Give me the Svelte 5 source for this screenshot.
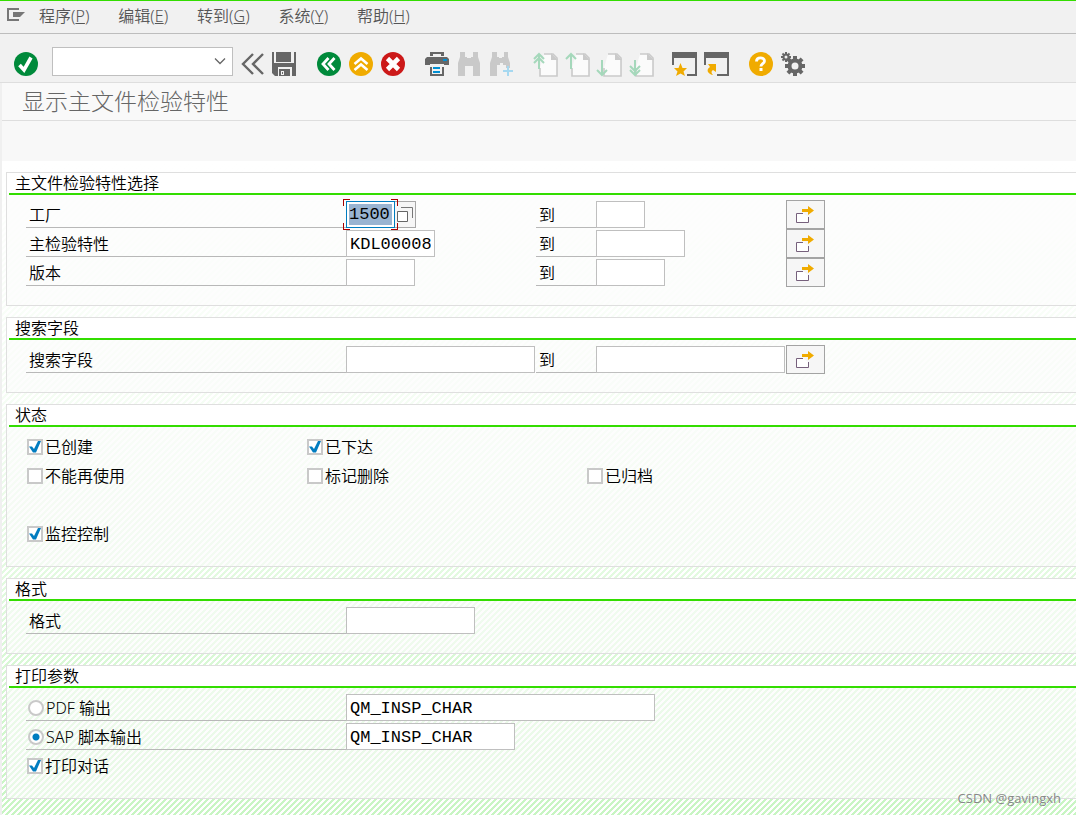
<script>
	const menus = [
		['程序', 'P'],
		['编辑', 'E'],
		['转到', 'G'],
		['系统', 'Y'],
		['帮助', 'H']
	];

	const toolGroups = [
		['collapse', 'save'],
		['back', 'up', 'cancel'],
		['print', 'find', 'findNext'],
		['firstPage', 'prevPage', 'nextPage', 'lastPage'],
		['session', 'shortcut'],
		['help', 'settings']
	];

	const toolLabels = {
		collapse: '隐藏命令字段',
		save: '保存',
		back: '返回',
		up: '退出',
		cancel: '取消',
		print: '打印',
		find: '查找',
		findNext: '继续查找',
		firstPage: '第一页',
		prevPage: '上一页',
		nextPage: '下一页',
		lastPage: '最后一页',
		session: '新会话',
		shortcut: '创建快捷方式',
		help: '帮助',
		settings: '定制本地布局'
	};

	const teeth = [0, 45, 90, 135, 180, 225, 270, 315];

	let ranges = $state([
		{ id: 'plant', label: '工厂', size: 'w4', from: '1500', to: '', active: true },
		{ id: 'char', label: '主检验特性', size: 'w8', from: 'KDL00008', to: '' },
		{ id: 'version', label: '版本', size: 'w6', from: '', to: '' }
	]);
	let search = $state([{ id: 'search', label: '搜索字段', size: 'w18', from: '', to: '' }]);

	let statuses = $state([
		[
			{ label: '已创建', checked: true },
			{ label: '已下达', checked: true }
		],
		[
			{ label: '不能再使用', checked: false },
			{ label: '标记删除', checked: false },
			{ label: '已归档', checked: false }
		],
		[],
		[{ label: '监控控制', checked: true }]
	]);

	let layout = $state('');
	let output = $state('sap');
	let pdfForm = $state('QM_INSP_CHAR');
	let sapForm = $state('QM_INSP_CHAR');
	let dialog = $state(true);
</script>

{#snippet page(arrow)}
	<path d="M11 2h9l4 4v18H7V16" fill="#fbfbfb" stroke="#cacaca" stroke-width="1.6" />
	<path d="M18 1l7 7h-7z" fill="#cacaca" />
	<path d={arrow} fill="none" stroke="#a5d8bb" stroke-width="2" />
{/snippet}

{#snippet icon(name)}
	<svg viewBox="0 0 24 24" aria-hidden="true">
		{#if name === 'enter'}
			<circle cx="12" cy="12" r="12" fill="#008a3b" />
			<path d="M5.500 13l4.500 5L17 5.500" fill="none" stroke="#fff" stroke-width="3.600" />
		{:else if name === 'collapse'}
			<path d="M12 2L2 12l10 10M22 2L12 12l10 10" fill="none" stroke="#666" stroke-width="2.400" />
		{:else if name === 'save'}
			<path d="M-1 0h2v11h20V0h2v24h-4v-9H5v9H2l-3-3z" fill="#666" />
			<path d="M3 0h15v10H3zM6 17h11v7H6z" fill="#666" />
			<path d="M8 19h3v4H8z" fill="#f1f1f1" />
			<path d="M9 20h1v2H9z" fill="#666" />
		{:else if name === 'back'}
			<circle cx="12" cy="12" r="12" fill="#008a3b" />
			<path d="M11.500 6L6 12l5.500 6M17.500 6L12 12l5.500 6" fill="none" stroke="#fff" stroke-width="2.800" />
		{:else if name === 'up'}
			<circle cx="12" cy="12" r="12" fill="#f0ab00" />
			<path d="M5.500 12L12 6.500l6.500 5.500M5.500 18l6.500-5.500 6.500 5.500" fill="none" stroke="#fff" stroke-width="2.600" />
		{:else if name === 'cancel'}
			<circle cx="12" cy="12" r="12" fill="#cc1919" />
			<path d="M6.500 6.500l11 11M17.500 6.500l-11 11" stroke="#fff" stroke-width="4.600" />
		{:else if name === 'print'}
			<path d="M5 4V0h14v4h-3V2H8v2z" fill="#666" />
			<path d="M2 5h20l2 2v6h-5v-1H5v1H0V7z" fill="#666" />
			<path d="M5 15h2v7h10v-7h2v9H5z" fill="#666" />
			<path d="M18 7h4v2h-4zM8 15h7v2H8zM8 19h7v2H8z" fill="#008fd3" />
		{:else if name === 'find'}
			<path d="M3 0h5v5h2v1h4V5h2V0h5v5l2 6v13h-7V14H8v10H1V11l2-6z" fill="#c9c9c9" />
		{:else if name === 'findNext'}
			<path d="M3 0h5v5h2v1h3V5h2V0h4v5l2 6v5h-4v-3h-3v-2h-3v2H8v11H1V11l2-6z" fill="#c9c9c9" />
			<path d="M19 14v10M14 19h10" stroke="#a6d8f0" stroke-width="2" />
		{:else if name === 'firstPage'}
			{@render page('M6 17V2M1 7l5-5 5 5M1 11l5-5 5 5')}
		{:else if name === 'prevPage'}
			{@render page('M6 17V2M1 7l5-5 5 5')}
		{:else if name === 'nextPage'}
			{@render page('M5 8v15M0 18l5 5 5-5')}
		{:else if name === 'lastPage'}
			{@render page('M6 8v15M1 18l5 5 5-5M1 14l5 5 5-5')}
		{:else if name === 'session'}
			<path d="M-1 0h25v24H14v-2h8V6H1v7h-2z" fill="#666" />
			<path d="M7.500 11l2 5H14l-3.500 3.500L12 24l-4.500-2.500L3 24l1.500-4.500L1 16h4.500z" fill="#f0ab00" />
		{:else if name === 'shortcut'}
			<path d="M-1 0h25v24H12v-2h10V6H1v7h-2z" fill="#666" />
			<path d="M3 12h8v8l-3-2c-2 1-2 3 0 5-6-1-7-6-3-8z" fill="#f0ab00" />
		{:else if name === 'help'}
			<circle cx="12" cy="12" r="12" fill="#f0ab00" />
			<path d="M7.500 9.500c0-5 8-4.500 8-.5 0 2.600-3.600 2.800-3.600 5.500" fill="none" stroke="#fff" stroke-width="2.800" />
			<path d="M10.500 16h3v3h-3z" fill="#fff" />
		{:else if name === 'settings'}
			<g transform="translate(14 14)" stroke="#666">
				{#each teeth as angle}
					<path d="M0 -6V-10" stroke-width="4" transform="rotate({angle})" />
				{/each}
				<circle r="5.500" fill="none" stroke-width="4" />
			</g>
			<g transform="translate(5 5)" stroke="#666">
				{#each teeth as angle}
					<path d="M0 -3V-5" stroke-width="2" transform="rotate({angle})" />
				{/each}
				<circle r="2.500" fill="#f1f1f1" stroke-width="2" />
			</g>
		{/if}
	</svg>
{/snippet}

{#snippet rangeRow(row)}
	<div class="row">
		<label class="name" for="{row.id}-from">{row.label}</label>
		<div class="value">
			{#if row.active}
				<span class="focus">
					<input id="{row.id}-from" class="field {row.size} active" bind:value={row.from} />
				</span>
				<button class="lookup" aria-label="值列表">
					<svg viewBox="0 0 18 18" aria-hidden="true">
						<path d="M5 1.500h11.500V12" fill="none" stroke="#777" />
						<path d="M1.500 5.500h10v10h-10z" fill="#fff" stroke="#666" />
					</svg>
				</button>
			{:else}
				<input id="{row.id}-from" class="field {row.size}" bind:value={row.from} />
			{/if}
		</div>
		<label class="name" for="{row.id}-to">到</label>
		<div class="value">
			<input id="{row.id}-to" class="field {row.size}" bind:value={row.to} />
		</div>
		<button class="more" aria-label="多项选择">
			<svg viewBox="0 0 18 18" aria-hidden="true">
				<path d="M7 7.500H.5v9h12V11" fill="#fff" stroke="#76607c" />
				<path d="M6 3h6V0l6 4.500L12 9V6H6z" fill="#f0ab00" />
			</svg>
		</button>
	</div>
{/snippet}

<div class="window">
	<nav class="menubar">
		<button class="system" aria-label="菜单">
			<svg viewBox="0 0 18 14" aria-hidden="true">
				<path d="M12 1H1v11h11" fill="none" stroke="#777" stroke-width="2" />
				<path d="M6 4h12l-5 5H6z" fill="#777" />
			</svg>
		</button>
		{#each menus as [text, key]}
			<button>{text}(<u>{key}</u>)</button>
		{/each}
	</nav>

	<div class="toolbar">
		<button class="tool" aria-label="回车">{@render icon('enter')}</button>
		<div class="command">
			<select aria-label="命令字段"><option></option></select>
			<svg viewBox="0 0 10 6" aria-hidden="true">
				<path d="M0 0.500l5 5 5-5" fill="none" stroke="#666" stroke-width="1.300" />
			</svg>
		</div>
		{#each toolGroups as group}
			<div class="tools">
				{#each group as name}
					<button class="tool" aria-label={toolLabels[name]}>{@render icon(name)}</button>
				{/each}
			</div>
		{/each}
	</div>

	<h1>显示主文件检验特性</h1>
	<div class="appbar"></div>

	<main>
		<section>
			<h2>主文件检验特性选择</h2>
			<div class="body">
				{#each ranges as row}
					{@render rangeRow(row)}
				{/each}
			</div>
		</section>

		<section>
			<h2>搜索字段</h2>
			<div class="body">
				{#each search as row}
					{@render rangeRow(row)}
				{/each}
			</div>
		</section>

		<section>
			<h2>状态</h2>
			<div class="body">
				{#each statuses as line}
					<div class="checks">
						{#each line as item}
							<label class="option"><input type="checkbox" bind:checked={item.checked} />{item.label}</label>
						{/each}
					</div>
				{/each}
			</div>
		</section>

		<section>
			<h2>格式</h2>
			<div class="body">
				<div class="row">
					<label class="name" for="layout">格式</label>
					<input id="layout" class="field w12" bind:value={layout} />
				</div>
			</div>
		</section>

		<section>
			<h2>打印参数</h2>
			<div class="body">
				<div class="row">
					<label class="name option"><input type="radio" name="output" value="pdf" bind:group={output} />PDF 输出</label>
					<input class="field w30" aria-label="PDF 表格" bind:value={pdfForm} />
				</div>
				<div class="row">
					<label class="name option"><input type="radio" name="output" value="sap" bind:group={output} />SAP 脚本输出</label>
					<input class="field w16" aria-label="SAP 脚本表格" bind:value={sapForm} />
				</div>
				<div class="checks">
					<label class="option"><input type="checkbox" bind:checked={dialog} />打印对话</label>
				</div>
			</div>
		</section>
	</main>

	<span class="credit">CSDN @gavingxh</span>
</div>

<style>
	:global(body) {
		background: #f0f0f0;
	}

	.window {
		position: relative;
		display: flex;
		flex-direction: column;
		min-height: 100vh;
		box-sizing: border-box;
		border-top: 1px solid #33dd00;
		font: 350 16px/24px "Noto Sans", "Noto Sans CJK SC", sans-serif;
		color: #000;
	}

	button {
		padding: 0;
		border: 0;
		background: none;
		font: inherit;
		color: inherit;
	}

	svg {
		display: block;
		overflow: visible;
	}

	.menubar {
		display: flex;
		align-items: center;
		gap: 29px;
		height: 32px;
		padding-left: 7px;
		background: #f1f1f1;
		border-bottom: 1px solid #bdbdbd;
		color: #555;
	}

	.menubar button {
		padding-bottom: 2px;
	}

	.menubar .system {
		margin-right: -15px;
		padding-bottom: 4px;
	}

	.system svg {
		width: 18px;
		height: 14px;
	}

	.toolbar {
		display: flex;
		align-items: center;
		height: 49px;
		padding: 11px 0 0 14px;
		box-sizing: border-box;
		background: #f1f1f1;
		border-bottom: 1px solid #dedede;
	}

	.tool svg {
		width: 24px;
		height: 24px;
	}

	.tools {
		display: flex;
		gap: 8px;
		margin-right: 20px;
	}

	.command {
		position: relative;
		margin: 0 8px 4px 14px;
	}

	.command select {
		display: block;
		appearance: none;
		width: 181px;
		height: 29px;
		border: 1px solid #bfbfbf;
		border-radius: 0;
		background: #fff;
	}

	.command svg {
		position: absolute;
		top: 11px;
		right: 8px;
		width: 10px;
		height: 6px;
		pointer-events: none;
	}

	h1 {
		margin: 0 0 0 2px;
		padding-left: 20px;
		background: #f9f9f9;
		border-bottom: 1px solid #dedede;
		font-size: 23px;
		font-weight: 300;
		line-height: 37px;
		color: #666;
	}

	.appbar {
		height: 40px;
		margin-left: 2px;
		background: #f8f8f8;
	}

	main {
		flex: 1;
		display: flex;
		flex-direction: column;
		gap: 11px;
		margin-left: 2px;
		padding: 11px 0 16px 4px;
		background:
			linear-gradient(#fff, rgba(255, 255, 255, 0.8) 40%, rgba(255, 255, 255, 0)),
			linear-gradient(135deg, #fff 25%, #c8f5c3 25% 50%, #fff 50% 75%, #c8f5c3 75%) 0 0 / 6px 6px;
	}

	section {
		border: 1px solid #dfdfdf;
		border-right: 0;
		background: rgba(251, 251, 251, 0.6);
	}

	h2 {
		margin: 0;
		padding: 0 0 2px 8px;
		height: 20px;
		background: linear-gradient(#33dd00, #33dd00) 2px 100% / 100% 2px no-repeat #fff;
		font-size: 16px;
		font-weight: inherit;
		line-height: 20px;
	}

	.body {
		padding: 5px 0 18px 19px;
	}

	.row {
		display: grid;
		grid-template-columns: 320px 190px 60px 190px 39px;
		align-items: center;
		height: 29px;
	}

	.name {
		height: 26px;
		padding-left: 3px;
		border-bottom: 1px solid #b8b8b8;
		line-height: 28px;
	}

	.value {
		display: flex;
	}

	.field {
		box-sizing: border-box;
		height: 27px;
		padding: 2px 3px 0;
		border: 1px solid #bfbfbf;
		border-radius: 0;
		background: #fff;
		font: 17px "Liberation Mono", "Noto Sans CJK SC", monospace;
		color: #000;
		outline: 0;
	}

	.w4 { width: 49px; }
	.w6 { width: 69px; }
	.w8 { width: 89px; }
	.w12 { width: 129px; }
	.w16 { width: 169px; }
	.w18 { width: 189px; }
	.w30 { width: 309px; }

	.active {
		display: block;
		padding: 2px;
		border-color: #007cc0;
		background: linear-gradient(#99b4d1, #99b4d1) content-box, #fff;
	}

	.focus {
		position: relative;
	}

	/* red corner marks around the focused field */
	.focus::before {
		content: '';
		position: absolute;
		inset: -2px -3px;
		pointer-events: none;
		--mark: linear-gradient(#a80000, #a80000);
		background:
			var(--mark) 0 0 / 7px 1px, var(--mark) 0 0 / 1px 7px,
			var(--mark) 100% 0 / 7px 1px, var(--mark) 100% 0 / 1px 7px,
			var(--mark) 0 100% / 7px 1px, var(--mark) 0 100% / 1px 7px,
			var(--mark) 100% 100% / 7px 1px, var(--mark) 100% 100% / 1px 7px;
		background-repeat: no-repeat;
	}

	.lookup {
		box-sizing: border-box;
		width: 21px;
		border: 1px solid #a8a8a8;
		border-left: 0;
		background: #f6f6f6;
	}

	.lookup svg {
		width: 18px;
		height: 18px;
		margin-left: 1px;
	}

	.more {
		box-sizing: border-box;
		height: 29px;
		padding-left: 9px;
		border: 1px solid #a3a3a3;
		background: #f6f6f6;
	}

	.more svg {
		width: 18px;
		height: 18px;
	}

	.checks {
		display: grid;
		grid-template-columns: repeat(3, 280px);
		height: 29px;
	}

	.option {
		display: flex;
		align-items: center;
		gap: 2px;
		padding-left: 1px;
		white-space: pre;
	}

	.name.option {
		padding: 1px 0 0 2px;
		height: 25px;
	}

	.option input {
		appearance: none;
		box-sizing: border-box;
		flex: none;
		width: 16px;
		height: 16px;
		margin: 0;
		border: 2px solid #c9c9c9;
		background: #fff;
	}

	.option input[type='checkbox']:checked {
		background: url("data:image/svg+xml,%3Csvg xmlns='http://www.w3.org/2000/svg' viewBox='0 0 12 12'%3E%3Cpath d='M0 5.500h3l2 2.500 4-8h3L7 11.500H4z' fill='%23007cc0'/%3E%3C/svg%3E") #fff;
	}

	.option input[type='radio'] {
		border-radius: 50%;
	}

	.option input[type='radio']:checked {
		background: radial-gradient(circle, #007cc0 3px, #fff 4px);
	}

	.credit {
		position: absolute;
		right: 15px;
		bottom: 5px;
		font: 13px/24px "Open Sans", sans-serif;
		color: #888;
	}
</style>
